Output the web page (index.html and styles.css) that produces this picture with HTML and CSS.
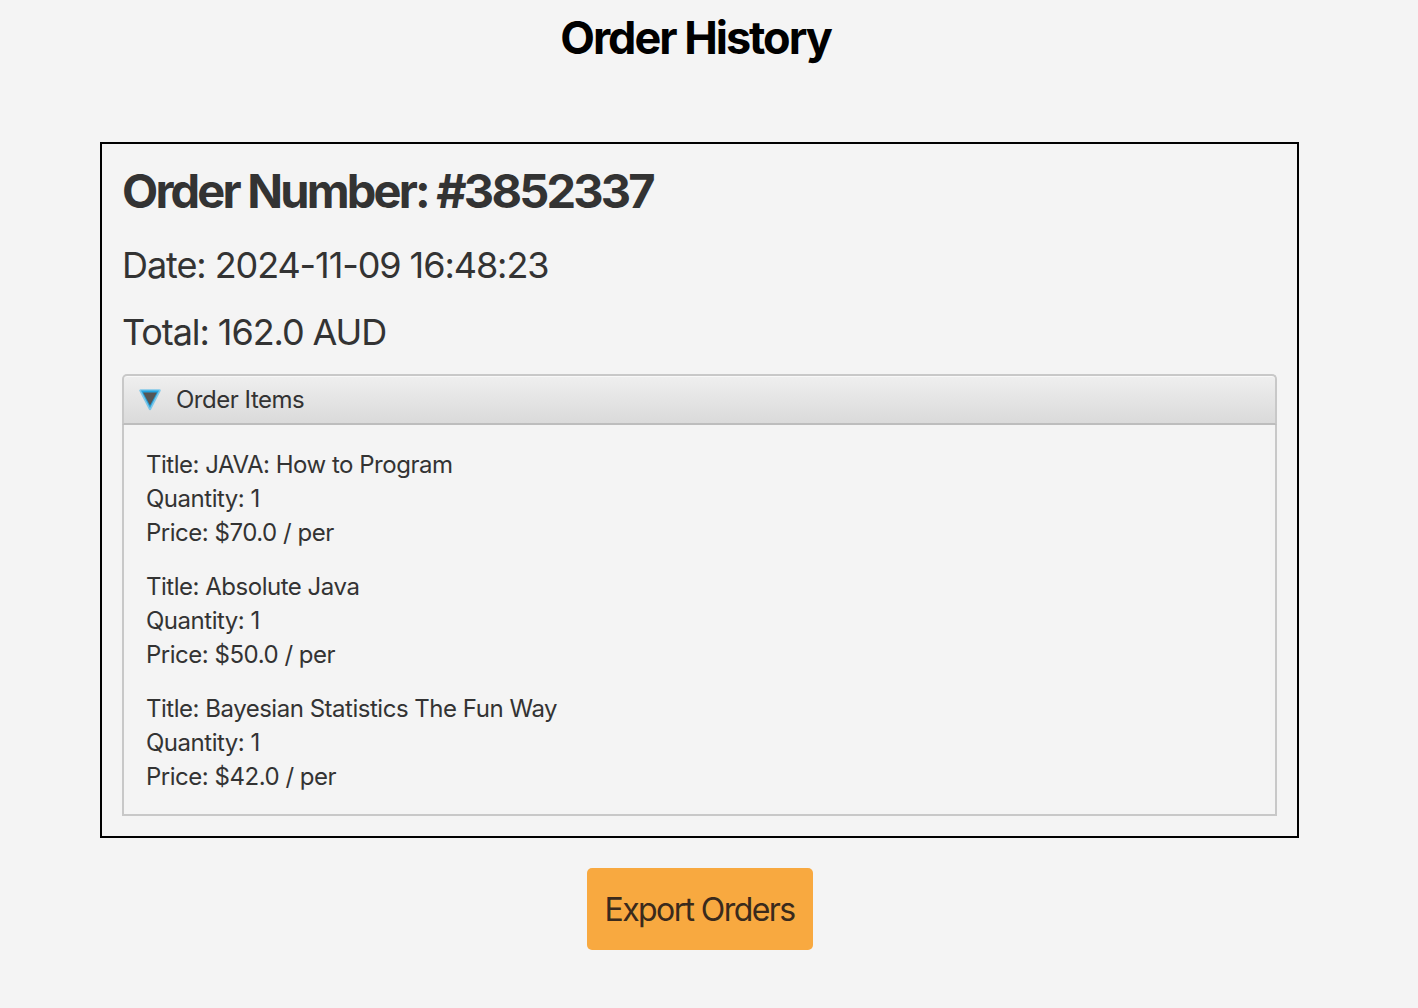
FILE: index.html
```html
<!DOCTYPE html>
<html lang="en">
<head>
<meta charset="utf-8">
<title>Order History</title>
<link rel="stylesheet" href="styles.css">
</head>
<body>
<main class="page">
  <h1 class="page-title">Order History</h1>
  <section class="order-card">
    <h2 class="order-number">Order Number: #3852337</h2>
    <p class="order-meta order-date">Date: 2024-11-09 16:48:23</p>
    <p class="order-meta order-total">Total: 162.0 AUD</p>
    <div class="titled-pane">
      <div class="tp-header">
        <svg class="tp-arrow" width="24" height="24" viewBox="0 0 24 24" aria-hidden="true">
          <polygon points="2.5,2.5 21.5,2.5 12,21" fill="#1c9fdc" stroke="#3db4ea" stroke-width="2.5" stroke-linejoin="round" opacity="0.6"/>
          <polygon points="3,2.5 21,2.5 12,20" fill="#22a3df"/>
          <polygon points="5,4.5 19,4.5 12,17.5" fill="#555555"/>
        </svg>
        <span class="tp-title">Order Items</span>
      </div>
      <div class="tp-content">
        <div class="item">
          <div class="item-line">Title: JAVA: How to Program</div>
          <div class="item-line">Quantity: 1</div>
          <div class="item-line">Price: $70.0 / per</div>
        </div>
        <div class="item">
          <div class="item-line">Title: Absolute Java</div>
          <div class="item-line">Quantity: 1</div>
          <div class="item-line">Price: $50.0 / per</div>
        </div>
        <div class="item">
          <div class="item-line">Title: Bayesian Statistics The Fun Way</div>
          <div class="item-line">Quantity: 1</div>
          <div class="item-line">Price: $42.0 / per</div>
        </div>
      </div>
    </div>
  </section>
  <button class="export-btn" type="button">Export Orders</button>
</main>
</body>
</html>
```

FILE: styles.css
```css
html, body {
  margin: 0;
  padding: 0;
  background: #f4f4f4;
}

body {
  font-family: Inter, "Noto Sans", "Liberation Sans", sans-serif;
  color: #333333;
}

.page {
  width: 1399px;
  display: flex;
  flex-direction: column;
  align-items: center;
}

.page-title {
  margin: 0 8px 0 0;
  padding-top: 11px;
  font-size: 45px;
  line-height: 54px;
  font-weight: 700;
  color: #000000;
  letter-spacing: -0.045em;
}

.order-card {
  box-sizing: border-box;
  width: 1199px;
  margin-top: 77px;
  border: 2px solid #000000;
  padding: 17px 20px 20px 20px;
  display: flex;
  flex-direction: column;
}

.order-number {
  margin: 0;
  font-size: 47px;
  line-height: 60px;
  font-weight: 700;
  color: #333333;
  letter-spacing: -0.06em;
}

.order-meta {
  margin: 0;
  font-size: 36px;
  line-height: 44px;
  font-weight: 400;
  color: #333333;
  letter-spacing: -0.03em;
}

.order-date {
  margin-top: 22px;
}

.order-total {
  margin-top: 23px;
}

.titled-pane {
  margin-top: 20px;
  display: flex;
  flex-direction: column;
}

.tp-header {
  height: 47px;
  display: flex;
  align-items: center;
  gap: 14px;
  padding-left: 14px;
  border: 2px solid #c8c8c8;
  border-bottom-color: #bdbdbd;
  border-radius: 5px 5px 0 0;
  background: linear-gradient(#efefef, #dadada);
  box-shadow: inset 0 1px 0 #f8f8f8;
}

.tp-arrow {
  display: block;
  margin-top: 1px;
}

.tp-title {
  font-size: 24px;
  line-height: 30px;
  color: #333333;
  letter-spacing: -0.02em;
}

.tp-content {
  border: 2px solid #c8c8c8;
  border-top: none;
  background: #f4f4f4;
  padding: 23px 22px 20px 22px;
  display: flex;
  flex-direction: column;
  gap: 20px;
}

.item-line {
  font-size: 24px;
  line-height: 34px;
  color: #333333;
  letter-spacing: -0.02em;
}

.export-btn {
  margin-top: 30px;
  width: 226px;
  height: 82px;
  border: none;
  border-radius: 5px;
  background: #f8a940;
  font-family: Inter, "Noto Sans", "Liberation Sans", sans-serif;
  font-size: 32px;
  color: #3a2a1c;
  letter-spacing: -0.05em;
  padding: 0;
}
```
